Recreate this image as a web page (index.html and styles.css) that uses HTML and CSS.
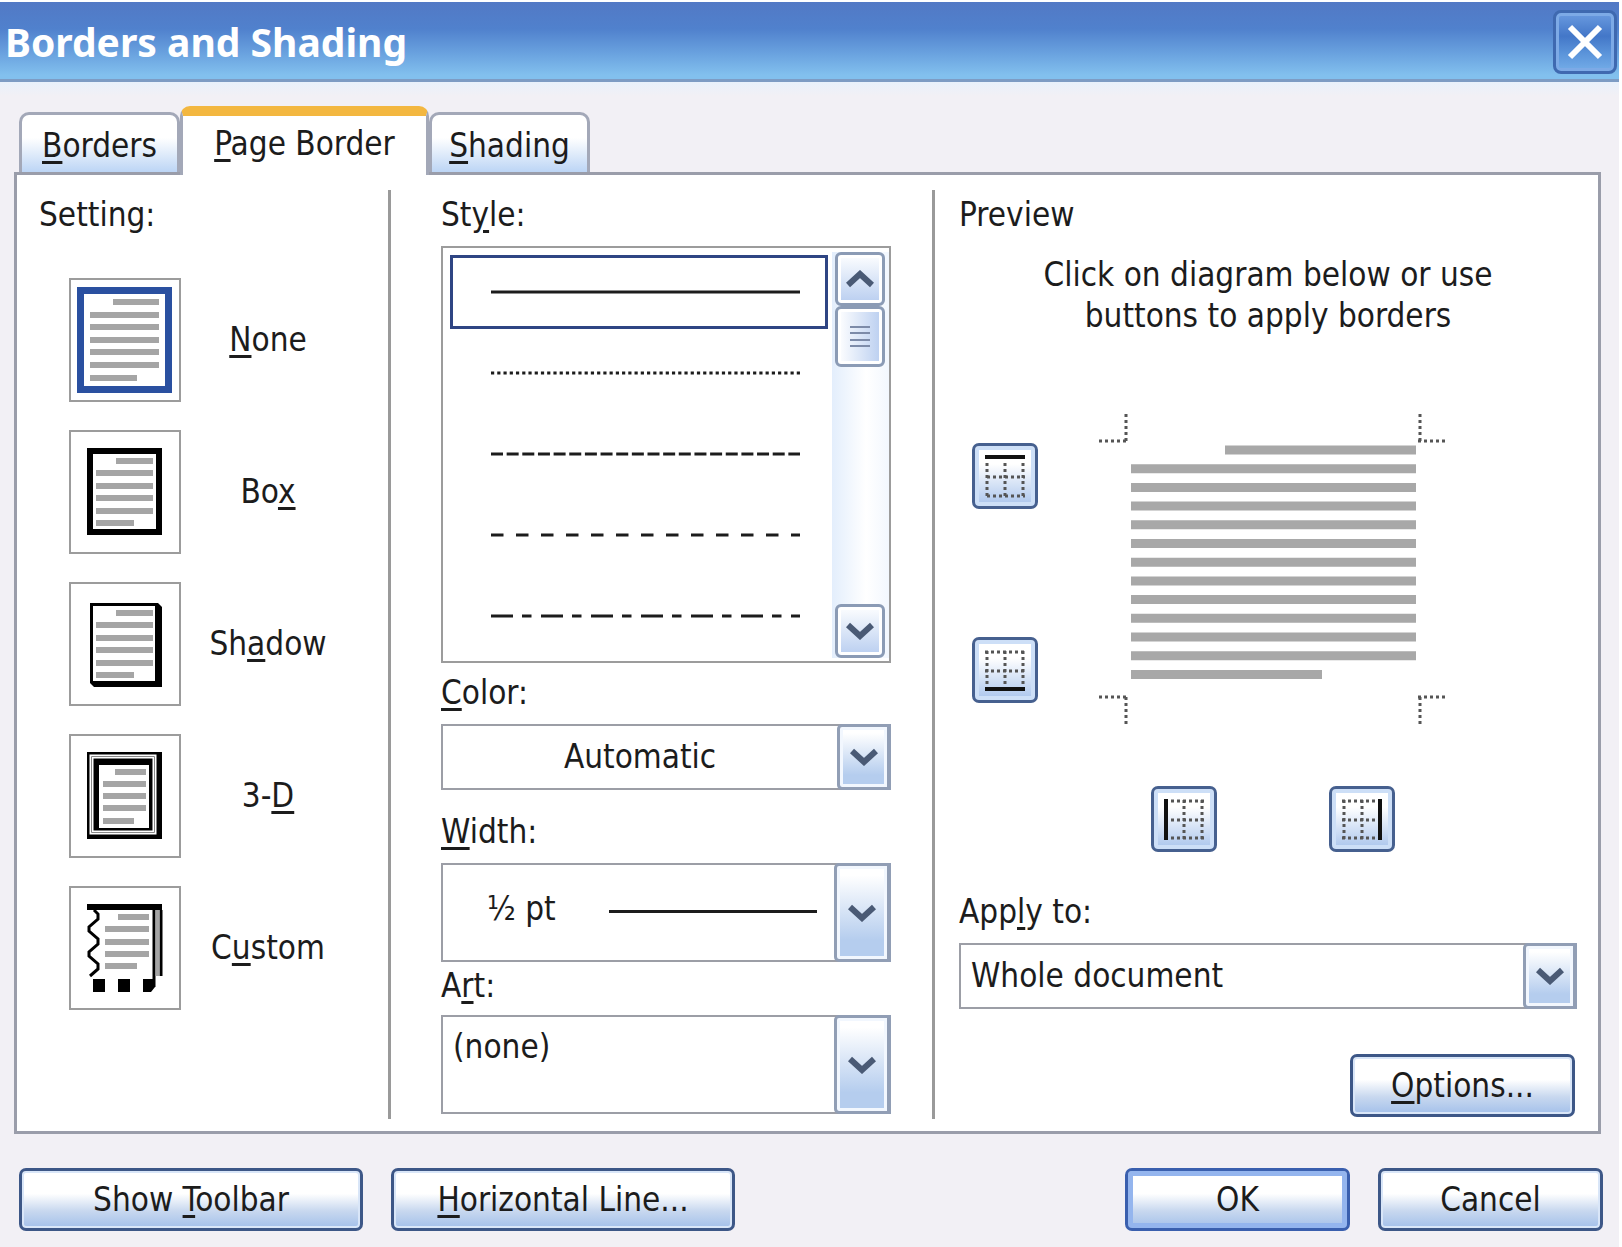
FILE: index.html
```
<!DOCTYPE html>
<html lang="en">
<head>
    <meta charset="UTF-8">
    <meta name="viewport" content="width=device-width, initial-scale=1.0">
    <title>Borders and Shading</title>
    <link rel="stylesheet" href="styles.css">
</head>
<body>
    <div class="dialog">
        <div class="titlebar">
            <h1>Borders and Shading</h1>
            <button class="close" aria-label="Close">
                <svg width="36" height="36" viewBox="0 0 36 36"><path d="M3 3L33 33M33 3L3 33" stroke="#fff" stroke-width="6"/></svg>
            </button>
        </div>
        <div class="content">
            <div class="tabs" role="tablist">
                <button class="tab" role="tab"><u>B</u>orders</button>
                <button class="tab active" role="tab" aria-selected="true"><u>P</u>age Border</button>
                <button class="tab" role="tab"><u>S</u>hading</button>
            </div>
            <div class="panel">
                <div class="column settings">
                    <div class="label">Setting:</div>
                    <div class="setting-list">
                        <label class="setting">
                            <input type="radio" name="setting" checked>
                            <svg class="setting-icon" viewBox="0 0 112 124">
                                <path d="M11.5 12.5H99.5V111.5H11.5Z" fill="none" stroke="#2a50a0" stroke-width="7"/>
                                <path d="M44 24H90M21 37H90M21 49H90M21 62H90M21 74H90M21 87H90M21 100H68" stroke="#a5a5a5" stroke-width="6"/>
                            </svg>
                            <span><u>N</u>one</span>
                        </label>
                        <label class="setting">
                            <input type="radio" name="setting">
                            <svg class="setting-icon" viewBox="0 0 112 124">
                                <path d="M21 21H90V102H21Z" fill="none" stroke="#000" stroke-width="6"/>
                                <path d="M47 31H84M27 43H84M27 56H84M27 68H84M27 81H84M27 93H65" stroke="#a5a5a5" stroke-width="6"/>
                            </svg>
                            <span>Bo<u>x</u></span>
                        </label>
                        <label class="setting">
                            <input type="radio" name="setting">
                            <svg class="setting-icon" viewBox="0 0 112 124">
                                <path d="M21 21H89L93 25V105H25L21 101ZM24 24V99H86V24Z" fill="#000" fill-rule="evenodd"/>
                                <path d="M47 31H84M27 43H84M27 56H84M27 68H84M27 81H84M27 93H65" stroke="#a5a5a5" stroke-width="6"/>
                            </svg>
                            <span>Sh<u>a</u>dow</span>
                        </label>
                        <label class="setting">
                            <input type="radio" name="setting">
                            <svg class="setting-icon" viewBox="0 0 112 124">
                                <path d="M18 18H93V105H18Z" fill="#000"/>
                                <path d="M22.5 22.5H85.5V98.5H22.5Z" fill="none" stroke="#fff" stroke-width="4"/>
                                <path d="M22.5 22.5H85.5V98.5H22.5Z" fill="none" stroke="#888" stroke-width="1"/>
                                <path d="M30 31H80V94H30Z" fill="#fff"/>
                                <path d="M46 38H77M34 50H77M34 62H77M34 74H77M34 87H65" stroke="#a5a5a5" stroke-width="6"/>
                            </svg>
                            <span>3-<u>D</u></span>
                        </label>
                        <label class="setting">
                            <input type="radio" name="setting">
                            <svg class="setting-icon" viewBox="0 0 112 124">
                                <path d="M18 18H93V24H18Z"/>
                                <path d="M25 24L29 28V33L20 41V45L29 53V58L20 66V70L29 78V83L21 90" fill="none" stroke="#000" stroke-width="3"/>
                                <path d="M85 24V101M92 24V90" stroke="#000" stroke-width="3"/>
                                <path d="M88.5 24V90" stroke="#a5a5a5" stroke-width="4"/>
                                <path d="M24 93H36V106H24ZM49 93H61V106H49ZM74 93H86V101L82 106H74Z"/>
                                <path d="M49 31H80M36 43H80M36 56H80M36 68H80M36 80H68" stroke="#a5a5a5" stroke-width="6"/>
                            </svg>
                            <span>C<u>u</u>stom</span>
                        </label>
                    </div>
                </div>

                <div class="column line-options">
                    <div class="label">St<u>y</u>le:</div>
                    <div class="style-box">
                        <div class="style-list">
                            <label class="style-item">
                                <input type="radio" name="line" aria-label="Solid" checked>
                                <svg class="line" height="4"><line x1="0" y1="2" x2="100%" y2="2"/></svg>
                            </label>
                            <label class="style-item">
                                <input type="radio" name="line" aria-label="Dotted">
                                <svg class="line" height="4"><line x1="0" y1="2" x2="100%" y2="2" stroke-dasharray="3.2 3.04"/></svg>
                            </label>
                            <label class="style-item">
                                <input type="radio" name="line" aria-label="Short dashes">
                                <svg class="line" height="4"><line x1="0" y1="2" x2="100%" y2="2" stroke-dasharray="12 3.65"/></svg>
                            </label>
                            <label class="style-item">
                                <input type="radio" name="line" aria-label="Spaced dashes">
                                <svg class="line" height="4"><line x1="0" y1="2" x2="100%" y2="2" stroke-dasharray="12.5 12.5"/></svg>
                            </label>
                            <label class="style-item">
                                <input type="radio" name="line" aria-label="Dash dot">
                                <svg class="line" height="4"><line x1="0" y1="2" x2="100%" y2="2" stroke-dasharray="22 9 9.5 9.5"/></svg>
                            </label>
                        </div>
                        <div class="scrollbar">
                            <button class="scroll-button" aria-label="Scroll up">
                                <svg width="28" height="18" viewBox="0 0 28 18"><path d="M2 15L14 4L26 15" fill="none" stroke="#4a5a75" stroke-width="6"/></svg>
                            </button>
                            <div class="thumb">
                                <svg width="20" height="23" viewBox="0 0 20 23"><path d="M0 2H20M0 8H20M0 15H20M0 21H20" stroke="#7d8ba8" stroke-width="2"/></svg>
                            </div>
                            <button class="scroll-button down" aria-label="Scroll down">
                                <svg width="28" height="18" viewBox="0 0 28 18"><path d="M2 3L14 14L26 3" fill="none" stroke="#4a5a75" stroke-width="6"/></svg>
                            </button>
                        </div>
                    </div>

                    <label class="label" for="color"><u>C</u>olor:</label>
                    <div class="combo">
                        <select id="color" class="centered"><option>Automatic</option></select>
                        <span class="arrow"><svg width="28" height="18" viewBox="0 0 28 18"><path d="M2 3L14 14L26 3" fill="none" stroke="#4a5a75" stroke-width="6"/></svg></span>
                    </div>

                    <label class="label width-label" for="width"><u>W</u>idth:</label>
                    <div class="combo tall">
                        <select id="width" class="width-select"><option>½ pt</option></select>
                        <span class="width-line"></span>
                        <span class="arrow"><svg width="28" height="18" viewBox="0 0 28 18"><path d="M2 3L14 14L26 3" fill="none" stroke="#4a5a75" stroke-width="6"/></svg></span>
                    </div>

                    <label class="label art-label" for="art">A<u>r</u>t:</label>
                    <div class="combo tall">
                        <select id="art" class="art-select"><option>(none)</option></select>
                        <span class="arrow"><svg width="28" height="18" viewBox="0 0 28 18"><path d="M2 3L14 14L26 3" fill="none" stroke="#4a5a75" stroke-width="6"/></svg></span>
                    </div>
                </div>

                <div class="column preview">
                    <div class="label">Preview</div>
                    <p class="hint">Click on diagram below or use<br>buttons to apply borders</p>
                    <div class="diagram">
                        <div class="side-buttons">
                            <button class="edge" aria-label="Top border">
                                <svg width="42" height="46" viewBox="0 0 42 46">
                                    <path d="M3 10V45M21 10V45M39 10V45M3 24H41M3 43H41" class="dots"/>
                                    <path d="M1 4H41" class="bar"/>
                                </svg>
                            </button>
                            <button class="edge" aria-label="Bottom border">
                                <svg width="42" height="46" viewBox="0 0 42 46">
                                    <path d="M3 4V37M21 4V37M39 4V37M1 5H41M1 24H41" class="dots"/>
                                    <path d="M1 42H41" class="bar"/>
                                </svg>
                            </button>
                        </div>
                        <svg class="page" viewBox="0 0 348 310">
                            <path d="M27 0V27M0 27H29M321 0V27M319 27H348M0 283H29M27 283V310M319 283H348M321 283V310" class="dots"/>
                            <path d="M126 36H317M32 54.7H317M32 73.4H317M32 92.1H317M32 110.8H317M32 129.5H317M32 148.2H317M32 166.9H317M32 185.6H317M32 204.3H317M32 223H317M32 241.7H317M32 260.4H223" stroke="#a8a8a8" stroke-width="9"/>
                        </svg>
                        <div class="bottom-buttons">
                            <button class="edge" aria-label="Left border">
                                <svg width="42" height="46" viewBox="0 0 42 46">
                                    <path d="M8 5H41M8 24H41M8 42H41M21 4V44M39 4V44" class="dots"/>
                                    <path d="M3 3V44" class="bar"/>
                                </svg>
                            </button>
                            <button class="edge" aria-label="Right border">
                                <svg width="42" height="46" viewBox="0 0 42 46">
                                    <path d="M1 5H35M1 24H35M1 42H35M3 4V44M21 4V44" class="dots"/>
                                    <path d="M39 3V44" class="bar"/>
                                </svg>
                            </button>
                        </div>
                    </div>
                    <label class="label apply-label" for="apply">App<u>l</u>y to:</label>
                    <div class="combo">
                        <select id="apply"><option>Whole document</option></select>
                        <span class="arrow"><svg width="28" height="18" viewBox="0 0 28 18"><path d="M2 3L14 14L26 3" fill="none" stroke="#4a5a75" stroke-width="6"/></svg></span>
                    </div>
                    <button class="button options"><u>O</u>ptions...</button>
                </div>
            </div>
            <div class="footer">
                <button class="button wide">Show <u>T</u>oolbar</button>
                <button class="button wide"><u>H</u>orizontal Line...</button>
                <button class="button ok">OK</button>
                <button class="button">Cancel</button>
            </div>
        </div>
    </div>
</body>
</html>
```
FILE: styles.css
```
* {
    box-sizing: border-box;
}
body {
    margin: 0;
    background-color: white;
    font-family: "DejaVu Sans Condensed", "DejaVu Sans", sans-serif;
    font-size: 33px;
    line-height: 40px;
    color: #1c1c1c;
}
button, select {
    font: inherit;
    color: inherit;
    padding: 0;
    margin: 0;
}
u {
    text-decoration-thickness: 3px;
    text-underline-offset: 4px;
}
svg {
    display: block;
}
input[type="radio"] {
    position: absolute;
    opacity: 0;
}
.dialog {
    display: flex;
    flex-direction: column;
    min-height: 100vh;
    padding: 2px 3px 0 0;
}
.titlebar {
    display: flex;
    justify-content: space-between;
    align-items: center;
    height: 80px;
    padding: 2px 2px 0 5px;
    background: linear-gradient(#5279c5, #5081cd 35%, #68a0de 65%, #82c0ee 95%);
    border-bottom: 3px solid #7d9cc4;
}
h1 {
    margin: 0;
    font-family: "Noto Sans", sans-serif;
    font-size: 39px;
    font-weight: bold;
    color: white;
}
.close {
    display: flex;
    justify-content: center;
    align-items: center;
    width: 64px;
    height: 64px;
    border: 3px solid #3f69b0;
    border-radius: 8px;
    background: linear-gradient(#6b9be0, #4377c8 40%, #5b94da 70%, #74ade8);
    box-shadow: inset 0 0 0 3px #7daae6;
}
.content {
    flex: 1;
    display: flex;
    flex-direction: column;
    padding: 24px 18px 16px 14px;
    background: linear-gradient(#e8f1fc, #f2f0f5 14px);
}
.tabs {
    display: flex;
    align-items: flex-end;
    padding-left: 5px;
}
.tab {
    height: 60px;
    width: 161px;
    padding-top: 4px;
    border: 3px solid #a3a8b8;
    border-bottom: none;
    border-radius: 10px 10px 0 0;
    background: linear-gradient(white 40%, #bcd5f5);
}
.tab.active {
    width: 249px;
    height: 69px;
    margin-bottom: -3px;
    padding-top: 0;
    padding-bottom: 4px;
    border-top: 10px solid #f3b740;
    background: white;
    z-index: 1;
}
.panel {
    flex: 1;
    display: grid;
    grid-template-columns: 371fr 544fr 666fr;
    padding: 15px 0 12px;
    border: 3px solid #9a9daa;
    background-color: white;
}
.column {
    display: flex;
    flex-direction: column;
    padding-top: 5px;
}
.label {
    margin-bottom: 11px;
}
.settings {
    padding-left: 22px;
}
.setting-list {
    display: flex;
    flex-direction: column;
    gap: 28px;
    padding: 32px 33px 0 30px;
}
.setting {
    display: flex;
    align-items: center;
}
.setting-icon {
    width: 112px;
    height: 124px;
    box-shadow: inset 0 0 0 2px #9c9c9c;
}
.setting span {
    flex: 1;
    text-align: center;
}
.line-options {
    border-left: 3px solid #9a9a9a;
    padding-left: 50px;
    padding-right: 41px;
}
.style-box {
    display: flex;
    gap: 4px;
    height: 417px;
    margin-bottom: 10px;
    padding: 4px 0 3px 7px;
    border: 2px solid #9c9c9c;
}
.style-list {
    flex: 1;
    display: flex;
    flex-direction: column;
    gap: 7px;
    padding-top: 3px;
}
.style-item {
    display: flex;
    align-items: center;
    height: 74px;
    padding: 0 25px 0 38px;
    border: 3px solid transparent;
}
.style-item:has(input:checked) {
    border-color: #2f4583;
}
.line {
    width: 100%;
    stroke: #1c1c1c;
    stroke-width: 3px;
}
.scrollbar {
    display: flex;
    flex-direction: column;
    width: 57px;
    padding: 0 4px 0 3px;
    background: linear-gradient(to right, #e3eefc, white 60%, #f2f7fe);
}
.scroll-button, .thumb {
    display: flex;
    justify-content: center;
    align-items: center;
    height: 54px;
    border: 3px solid #8b9bb5;
    border-radius: 6px;
    background: linear-gradient(#fdfeff, #b9cef0);
    box-shadow: inset 0 0 0 3px white;
}
.thumb {
    height: 61px;
    background: linear-gradient(to right, white, #b9cef0);
}
.down {
    margin-top: auto;
}
.combo {
    position: relative;
    height: 66px;
}
.combo select {
    appearance: none;
    width: 100%;
    height: 100%;
    padding: 0 60px 0 10px;
    border: 2px solid #9c9ea6;
    border-radius: 0;
    background-color: white;
}
.combo .centered {
    padding-left: 0;
    padding-right: 52px;
    text-align-last: center;
}
.arrow {
    position: absolute;
    top: 0;
    right: 0;
    bottom: 0;
    display: flex;
    justify-content: center;
    align-items: center;
    width: 54px;
    border: 3px solid #919eb5;
    border-right-width: 4px;
    border-radius: 5px 0 0 5px;
    background: linear-gradient(white 10%, #b5cdee 80%);
    box-shadow: inset 0 0 0 3px #f2f7fe;
    pointer-events: none;
}
.tall {
    height: 99px;
}
.tall .arrow {
    width: 57px;
}
.combo .width-select {
    padding-left: 44px;
    padding-bottom: 8px;
}
.width-line {
    position: absolute;
    top: 47px;
    left: 168px;
    right: 74px;
    height: 3px;
    background-color: #1c1c1c;
    pointer-events: none;
}
.combo .art-select {
    padding-bottom: 36px;
}
.width-label {
    margin-top: 22px;
}
.art-label {
    margin-top: 4px;
    margin-bottom: 9px;
}
.preview {
    border-left: 3px solid #9a9a9a;
    padding-left: 24px;
    padding-right: 21px;
}
.hint {
    margin: 8px 0 78px;
    line-height: 41px;
    text-align: center;
}
.diagram {
    display: grid;
    grid-template-columns: 66px 348px;
    column-gap: 61px;
    row-gap: 62px;
    padding-left: 13px;
}
.side-buttons {
    display: flex;
    flex-direction: column;
    gap: 128px;
    padding-top: 29px;
}
.bottom-buttons {
    grid-column: 2;
    display: flex;
    justify-content: center;
    gap: 112px;
}
.page {
    width: 348px;
    height: 310px;
}
.edge {
    display: flex;
    justify-content: center;
    align-items: center;
    width: 66px;
    height: 66px;
    border: 3px solid #46608f;
    border-radius: 7px;
    background: linear-gradient(white 30%, #a9c4ec);
    box-shadow: inset 0 0 0 4px #cddff7;
}
.dots {
    fill: none;
    stroke: #555;
    stroke-width: 3px;
    stroke-dasharray: 3 3;
}
.bar {
    stroke: #111;
    stroke-width: 4px;
}
.apply-label {
    margin-top: 40px;
}
.button {
    width: 225px;
    height: 63px;
    border: 3px solid #3d5787;
    border-radius: 7px;
    background: linear-gradient(white 40%, #c8d8ef 70%, #a3c0ea);
    box-shadow: inset 0 0 0 2px #d9e6f8;
}
.wide {
    width: 344px;
}
.options {
    align-self: flex-end;
    margin-top: 45px;
    margin-right: 2px;
}
.ok {
    margin-left: auto;
    border-color: #3a5fae;
    box-shadow: inset 0 0 0 5px #94b5ee;
}
.footer {
    display: flex;
    gap: 28px;
    padding: 34px 0 0 5px;
    margin-right: -2px;
}
```
